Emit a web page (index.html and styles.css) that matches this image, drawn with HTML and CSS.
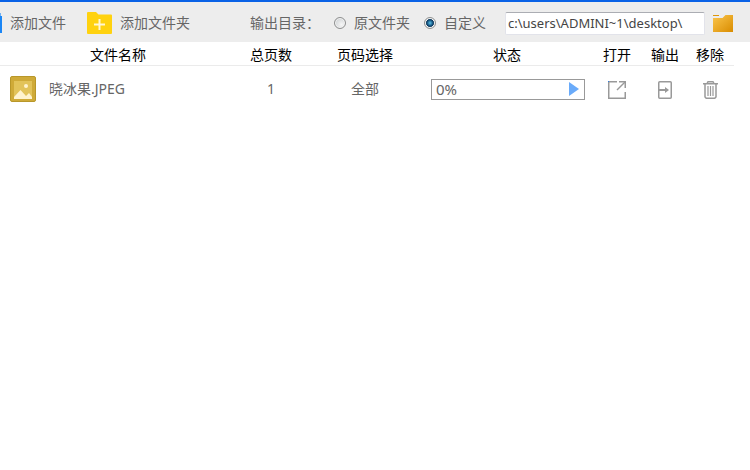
FILE: index.html
```
<!DOCTYPE html>
<html lang="zh-cn">
<head>
    <meta charset="UTF-8">
    <meta name="viewport" content="width=device-width, initial-scale=1.0">
    <title>文件列表</title>
    <link rel="stylesheet" href="styles.css">
</head>
<body>
    <div class="toolbar">
        <button type="button" class="add-btn add-file">
            <svg width="2" height="20" viewBox="0 0 2 20"><path d="M0 0h1v4H0z" fill="#6db0f5"/><path d="M0 3h2v17H0z" fill="#1b86f5"/></svg>
            添加文件
        </button>
        <button type="button" class="add-btn add-folder">
            <svg width="25" height="22" viewBox="0 0 25 22">
                <path d="M1 0h8l2.500 2.500H24a1 1 0 0 1 1 1V21a1 1 0 0 1-1 1H1a1 1 0 0 1-1-1V1a1 1 0 0 1 1-1z" fill="#ffd20f"/>
                <path d="M12.500 7v11M7 12.500h11" stroke="#fff6d5" stroke-width="2"/>
            </svg>
            添加文件夹
        </button>
        <div class="output">
            <span class="output-title">输出目录：</span>
            <label class="option"><input type="radio" name="dir" value="source">原文件夹</label>
            <label class="option"><input type="radio" name="dir" value="custom" checked>自定义</label>
            <input type="text" class="path" aria-label="输出目录" value="c:\users\ADMINI~1\desktop\">
            <button type="button" class="icon-btn" aria-label="选择文件夹">
                <svg width="20" height="17" viewBox="0 0 20 17">
                    <defs>
                        <linearGradient id="gold" x1="0" y1="0" x2="1" y2="1">
                            <stop offset="0" stop-color="#fbc64d"/>
                            <stop offset="1" stop-color="#d98c00"/>
                        </linearGradient>
                    </defs>
                    <path d="M0 0h6v1H0z" fill="#dc960d"/>
                    <path d="M0 3h9.500l3-3H20v17H0z" fill="url(#gold)"/>
                </svg>
            </button>
        </div>
    </div>

    <table class="files">
        <thead>
            <tr>
                <th class="col-name">文件名称</th>
                <th class="col-pages">总页数</th>
                <th class="col-range">页码选择</th>
                <th class="col-status">状态</th>
                <th class="col-open">打开</th>
                <th class="col-export">输出</th>
                <th class="col-remove">移除</th>
            </tr>
        </thead>
        <tbody>
            <tr>
                <td>
                    <div class="file">
                        <svg width="26" height="26" viewBox="0 0 26 26">
                            <rect x="0.500" y="0.500" width="25" height="25" rx="1.500" fill="#cfaa38" stroke="#b8972a"/>
                            <path d="M4 5h18v18H4z" fill="#e2c35a"/>
                            <circle cx="16" cy="10" r="2" fill="#fff3cf"/>
                            <path d="M4 23v-2l6.500-7 5.500 6 3-3 3 4v2z" fill="#fff3cf"/>
                        </svg>
                        <span>晓冰果.JPEG</span>
                    </div>
                </td>
                <td>1</td>
                <td>全部</td>
                <td>
                    <div class="progress">
                        <span>0%</span>
                        <button type="button" class="icon-btn" aria-label="开始">
                            <svg width="10" height="14" viewBox="0 0 10 14"><path d="M0 0l10 7-10 7z" fill="#6aabfa"/></svg>
                        </button>
                    </div>
                </td>
                <td>
                    <button type="button" class="icon-btn" aria-label="打开">
                        <svg width="18" height="18" viewBox="0 0 18 18" fill="none" stroke="#999" stroke-width="1.500">
                            <path d="M9 0.750H0.750v16.500h16.500V11M11 0.750h6.250V7"/>
                            <path d="M17 1L9 9"/>
                            <path d="M0 0h1v1H0z" fill="#2f80e8" stroke="none"/>
                        </svg>
                    </button>
                </td>
                <td>
                    <button type="button" class="icon-btn" aria-label="输出">
                        <svg width="14" height="18" viewBox="0 0 14 18" fill="none" stroke="#999" stroke-width="1.500">
                            <rect x="0.750" y="0.750" width="12.500" height="16.500" rx="1"/>
                            <path d="M1 9h7" stroke-width="2"/>
                            <path d="M7 6l4 3-4 3z" fill="#999" stroke="none"/>
                        </svg>
                    </button>
                </td>
                <td>
                    <button type="button" class="icon-btn" aria-label="移除">
                        <svg width="15" height="18" viewBox="0 0 15 18" fill="none" stroke="#999" stroke-width="1.500">
                            <path d="M0 2.750h15M4 2.500l1-1.750h5l1 1.750M2 3v13l1.200 1.250h8.600L13 16V3"/>
                            <path d="M5 5v10M7.500 5v10M10 5v10" stroke-width="1.200"/>
                        </svg>
                    </button>
                </td>
            </tr>
        </tbody>
    </table>
</body>
</html>
```
FILE: styles.css
```
* {
    box-sizing: border-box;
}
body {
    margin: 0;
    background-color: #fff;
    color: #666;
    font-family: "Noto Sans", "Noto Sans CJK SC", sans-serif;
    font-size: 14px;
    line-height: 20px;
}
button {
    padding: 0;
    border: none;
    background: none;
    color: inherit;
    font: inherit;
    cursor: pointer;
}
svg {
    display: block;
    flex: none;
}
.toolbar {
    display: flex;
    align-items: center;
    height: 42px;
    padding-top: 2px;
    border-top: 2px solid #0a62e6;
    background-color: #ededed;
    white-space: nowrap;
}
.add-btn {
    display: flex;
    align-items: center;
    gap: 8px;
}
.add-folder {
    margin-left: 21px;
}
.output {
    display: flex;
    flex: 1;
    align-items: center;
    margin-left: 60px;
    padding-right: 17px;
}
.output-title {
    margin-right: 14px;
}
.option {
    display: flex;
    align-items: center;
    gap: 8px;
    margin-right: 14px;
}
.option input {
    appearance: none;
    width: 12px;
    height: 12px;
    margin: 0;
    border: 1px solid #8e8f8f;
    border-radius: 50%;
    background: radial-gradient(circle at 65% 65%, #f6f6f6, #c4c8cb);
    box-shadow: inset 0 0 0 1px #f4f4f4;
}
.option input:checked {
    background: radial-gradient(circle, #5cc4ec 0, #0f4a75 3px, #0b2f4f 4px, #e4e8ea 4px);
}
.path {
    flex: 1;
    min-width: 0;
    height: 23px;
    margin: 0 8px 0 5px;
    padding: 0 2px;
    border: 1px solid #e2e3ea;
    border-top-color: #abadb3;
    border-radius: 2px;
    background-color: #fff;
    color: #444;
    font-family: "Noto Sans", sans-serif;
    font-size: 13px;
}
.files {
    width: calc(100% - 16px);
    border-collapse: separate;
    border-spacing: 0;
    table-layout: fixed;
}
.files th,
.files td {
    padding: 0;
    text-align: center;
}
.files th {
    height: 24px;
    padding-top: 2px;
    border-bottom: 1px solid #ebebeb;
    color: #000;
    font-weight: normal;
}
.files td {
    height: 46px;
}
.col-pages {
    width: 70px;
}
.col-range {
    width: 118px;
}
.col-status {
    width: 166px;
}
.col-open {
    width: 54px;
}
.col-export {
    width: 42px;
}
.col-remove {
    width: 48px;
}
.file {
    display: flex;
    align-items: center;
    gap: 13px;
    padding-left: 10px;
}
.progress {
    display: flex;
    align-items: center;
    justify-content: space-between;
    height: 21px;
    margin: 0 5px 0 7px;
    padding: 0 5px 0 4px;
    border: 1px solid #999;
    font-size: 15px;
}
.icon-btn {
    display: inline-block;
    vertical-align: middle;
}
```
